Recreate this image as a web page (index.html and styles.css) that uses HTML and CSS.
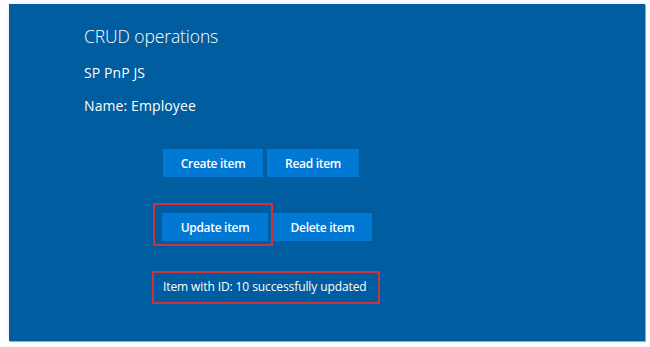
FILE: index.html
```html
<!DOCTYPE html>
<html>
<head>
<meta charset="utf-8">
<link rel="stylesheet" href="styles.css">
</head>
<body>
<div class="panel">
  <div class="title">CRUD operations</div>
  <div class="line sub">SP PnP JS</div>
  <div class="line name">Name: Employee</div>
  <div class="actions">
    <div class="row row1">
      <button class="btn btn-create">Create item</button>
      <button class="btn btn-read">Read item</button>
    </div>
    <div class="row row2">
      <button class="btn btn-update">Update item</button>
      <button class="btn btn-delete">Delete item</button>
      <span class="mark mark-update"></span>
    </div>
    <div class="status">
      <span class="status-text">Item with ID: 10 successfully updated</span>
      <span class="mark mark-status"></span>
    </div>
  </div>
</div>
</body>
</html>
```
FILE: styles.css
```css
html, body {
  margin: 0;
  padding: 0;
  background: #ffffff;
}
body {
  width: 650px;
  height: 347px;
  overflow: hidden;
  font-family: "Open Sans", "Noto Sans", sans-serif;
  color: #ffffff;
}
.panel {
  box-sizing: border-box;
  margin: 4px 0 0 9px;
  width: 636px;
  height: 337px;
  background: #005da0;
  box-shadow: 1px 1px 0 #7fb2dd, 0 0 3px rgba(0,0,0,0.12);
  padding: 20px 0 0 75px;
}
.title {
  font-size: 17.5px;
  font-weight: 300;
  line-height: 24px;
  letter-spacing: -0.1px;
}
.line {
  font-size: 14px;
  line-height: 18px;
  letter-spacing: 0.1px;
}
.sub {
  margin-top: 16px;
}
.name {
  margin-top: 15px;
}
.actions {
  margin-left: 79px;
  margin-top: 34px;
}
.row {
  display: flex;
  gap: 4px;
  position: relative;
}
.row2 {
  margin-top: 36px;
  gap: 5px;
}
.btn {
  box-sizing: border-box;
  height: 28px;
  border: none;
  background: #0078d4;
  color: #ffffff;
  font-family: "Open Sans", "Noto Sans", sans-serif;
  font-size: 12px;
  font-weight: 600;
  letter-spacing: -0.3px;
  padding: 0;
  margin: 0;
}
.btn-create { width: 100px; }
.btn-read { width: 92px; }
.btn-update { width: 106px; margin-left: -1px; }
.btn-delete { width: 99px; }
.mark {
  position: absolute;
  border: 2px solid #d0323c;
  box-sizing: border-box;
}
.mark-update {
  left: -10px;
  top: -10px;
  width: 120px;
  height: 43px;
}
.status {
  position: relative;
  margin-top: 37px;
  font-size: 12px;
  line-height: 18px;
  letter-spacing: -0.1px;
}
.mark-status {
  left: -11px;
  top: -7px;
  width: 228px;
  height: 33px;
}
```
